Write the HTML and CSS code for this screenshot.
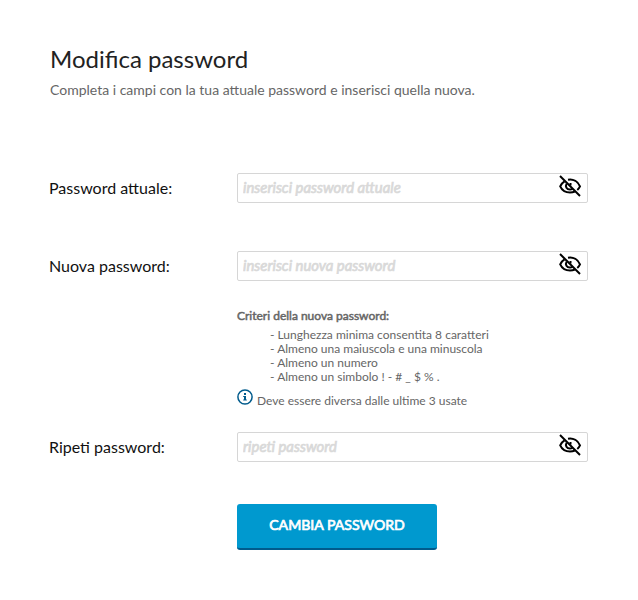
FILE: index.html
```html
<!DOCTYPE html>
<html lang="it">
<head>
  <meta charset="UTF-8">
  <meta name="viewport" content="width=device-width, initial-scale=1">
  <title>Modifica password</title>
  <link rel="stylesheet" href="styles.css">
</head>
<body>
  <svg class="icons" width="0" height="0">
    <symbol id="eye-off" viewBox="0 0 24 24">
      <path d="M6.500 7.300C4.600 8.500 3 10.300 2.200 12.300 4 16.200 7.500 18.500 12 18.500c1.800 0 3.400-.3 4.800-1"/>
      <path d="M10 5.800C15.500 4.700 20 7.800 22 12.300c-.7 1.500-1.500 2.600-2.700 3.600"/>
      <path d="M8.600 9.800C7 12.500 8.600 15.500 12 15.500c1 0 1.700-.3 2.400-.8"/>
      <path d="M12.500 9v2.500"/>
      <path d="M2 2l20 20"/>
    </symbol>
  </svg>

  <main>
    <h1>Modifica password</h1>
    <p class="intro">Completa i campi con la tua attuale password e inserisci quella nuova.</p>

    <form>
      <div class="row">
        <label for="attuale">Password attuale:</label>
        <div class="field">
          <input type="password" id="attuale" placeholder="inserisci password attuale">
          <svg class="eye"><use href="#eye-off"/></svg>
        </div>
      </div>

      <div class="row nuova">
        <label for="nuova">Nuova password:</label>
        <div class="field">
          <input type="password" id="nuova" placeholder="inserisci nuova password">
          <svg class="eye"><use href="#eye-off"/></svg>
        </div>
      </div>

      <div class="criteri">
        <strong>Criteri della nuova password:</strong>
        <ul>
          <li>- Lunghezza minima consentita 8 caratteri</li>
          <li>- Almeno una maiuscola e una minuscola</li>
          <li>- Almeno un numero</li>
          <li>- Almeno un simbolo ! - # _ $ % .</li>
        </ul>
        <div class="info">
          <svg width="16" height="16" viewBox="0 0 16 16">
            <circle cx="8" cy="8" r="7.100"/>
            <path d="M7 4h2v2H7zM6.200 7H9v3.500h.8v1H6.200v-1H7V8h-.8z"/>
          </svg>
          <span>Deve essere diversa dalle ultime 3 usate</span>
        </div>
      </div>

      <div class="row">
        <label for="ripeti">Ripeti password:</label>
        <div class="field">
          <input type="password" id="ripeti" placeholder="ripeti password">
          <svg class="eye"><use href="#eye-off"/></svg>
        </div>
      </div>

      <button type="button">CAMBIA PASSWORD</button>
    </form>
  </main>
</body>
</html>
```
FILE: styles.css
```css
* {
  box-sizing: border-box;
}

body {
  margin: 0;
  background: #fff;
  color: #666;
  font-family: Lato, sans-serif;
}

.icons {
  display: block;
}

main {
  width: 539px;
  margin: 0 49px;
  padding-top: 43px;
}

h1 {
  margin: 0 0 0 1px;
  color: #222;
  font-size: 24px;
  font-weight: 400;
  line-height: 32px;
}

.intro {
  margin: 5px 0 73px 1px;
  font-size: 14px;
  line-height: 20px;
}

.row {
  display: flex;
  align-items: center;
  height: 30px;
}

.row label {
  width: 188px;
  padding-bottom: 2px;
  color: #111;
  font-size: 16px;
}

.field {
  position: relative;
  flex: 1;
}

.field input {
  display: block;
  width: 100%;
  height: 30px;
  padding: 0 40px 2px 5px;
  border: 1px solid #d6d6d6;
  border-radius: 2px;
  font-family: Lato, sans-serif;
  font-size: 14.900px;
}

.field input::placeholder {
  color: #d9d9d9;
  font-style: italic;
  -webkit-text-stroke: 0.7px #d9d9d9;
}

.eye {
  position: absolute;
  top: 1px;
  right: 6px;
  width: 24px;
  height: 24px;
  fill: none;
  stroke: #000;
  stroke-width: 2;
}

.nuova {
  margin-top: 48px;
}

.criteri {
  margin: 27px 0 24px 188px;
  font-size: 12px;
  line-height: 14px;
}

.criteri strong {
  display: block;
  font-weight: 400;
  line-height: 16px;
  -webkit-text-stroke: 0.5px #666;
}

.criteri ul {
  margin: 4px 0 5px 33px;
  padding: 0;
  list-style: none;
}

.info {
  display: flex;
  gap: 4px;
}

.info span {
  padding-top: 5px;
}

.info circle {
  fill: none;
  stroke: #005b8c;
  stroke-width: 1.500;
}

.info path {
  fill: #005b8c;
}

button {
  display: block;
  width: 200px;
  height: 46px;
  margin: 42px 0 0 188px;
  padding: 0 0 4px;
  border: 0;
  border-bottom: 2px solid #005b8c;
  border-radius: 3px;
  background: #0099cf;
  color: #fff;
  font-family: Lato, sans-serif;
  font-size: 14.100px;
  -webkit-text-stroke: 0.7px #fff;
  cursor: pointer;
}
```
